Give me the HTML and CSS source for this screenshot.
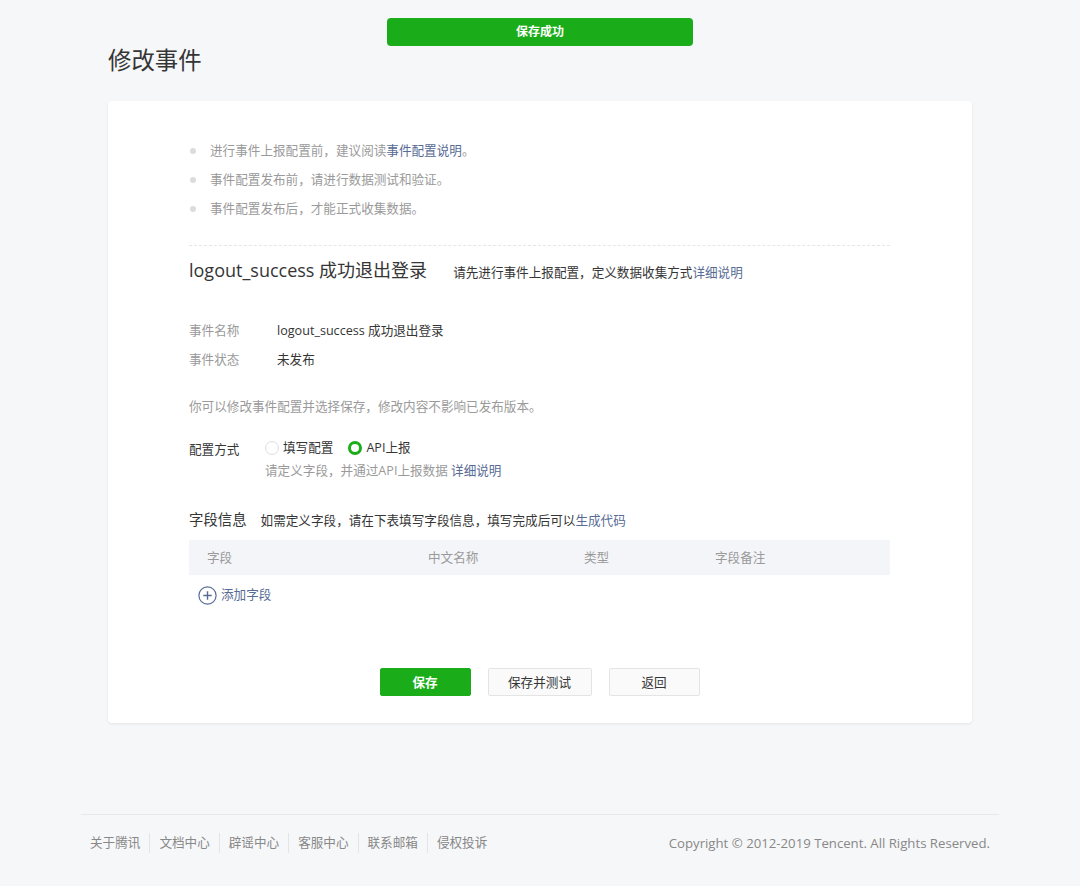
FILE: index.html
```html
<!DOCTYPE html>
<html lang="zh-CN">
<head>
    <meta charset="UTF-8">
    <meta name="viewport" content="width=device-width, initial-scale=1.0">
    <title>修改事件</title>
    <link rel="stylesheet" href="styles.css">
</head>
<body>

    <div class="toast">保存成功</div>

    <div class="main">
        <h1 class="page-title">修改事件</h1>

        <div class="card">
            <ul class="tips">
                <li>进行事件上报配置前，建议阅读<a href="#">事件配置说明</a>。</li>
                <li>事件配置发布前，请进行数据测试和验证。</li>
                <li>事件配置发布后，才能正式收集数据。</li>
            </ul>

            <div class="event-head">
                <h2>logout_success 成功退出登录</h2>
                <span class="desc">请先进行事件上报配置，定义数据收集方式<a href="#">详细说明</a></span>
            </div>

            <div class="info">
                <div class="info-row">
                    <span class="label">事件名称</span>
                    <span class="value">logout_success 成功退出登录</span>
                </div>
                <div class="info-row">
                    <span class="label">事件状态</span>
                    <span class="value">未发布</span>
                </div>
            </div>

            <p class="notice">你可以修改事件配置并选择保存，修改内容不影响已发布版本。</p>

            <div class="config">
                <span class="config-label">配置方式</span>
                <div class="config-body">
                    <div class="radios">
                        <label class="radio"><i class="dot"></i>填写配置</label>
                        <label class="radio checked"><i class="dot"></i>API上报</label>
                    </div>
                    <p class="hint">请定义字段，并通过API上报数据 <a href="#">详细说明</a></p>
                </div>
            </div>

            <div class="fields-head">
                <h3>字段信息</h3>
                <span class="desc">如需定义字段，请在下表填写字段信息，填写完成后可以<a href="#">生成代码</a></span>
            </div>

            <div class="table-head">
                <span class="col col-name">字段</span>
                <span class="col col-cn">中文名称</span>
                <span class="col col-type">类型</span>
                <span class="col col-note">字段备注</span>
            </div>

            <a href="#" class="add-field">
                <svg width="19" height="19" viewBox="0 0 19 19">
                    <circle cx="9.5" cy="9.5" r="8.6" fill="none" stroke="#576b95" stroke-width="1.2"/>
                    <path d="M9.5 5.3v8.4M5.3 9.5h8.4" stroke="#576b95" stroke-width="1.4"/>
                </svg>
                添加字段
            </a>

            <div class="actions">
                <button class="btn btn-primary">保存</button>
                <button class="btn">保存并测试</button>
                <button class="btn">返回</button>
            </div>
        </div>
    </div>

    <div class="footer">
        <div class="links">
            <a href="#">关于腾讯</a>
            <a href="#">文档中心</a>
            <a href="#">辟谣中心</a>
            <a href="#">客服中心</a>
            <a href="#">联系邮箱</a>
            <a href="#">侵权投诉</a>
        </div>
        <div class="copyright">Copyright © 2012-2019 Tencent. All Rights Reserved.</div>
    </div>

</body>
</html>
```

FILE: styles.css
```css
* {
    margin: 0;
    padding: 0;
    box-sizing: border-box;
}

body {
    background: #f6f7f9;
    font-family: "Open Sans", "Noto Sans CJK SC", sans-serif;
    font-size: 12.6px;
    color: #353535;
    padding-top: 44px;
}

a {
    color: #576b95;
    text-decoration: none;
}

.toast {
    position: absolute;
    top: 18px;
    left: 387px;
    width: 306px;
    height: 28px;
    line-height: 28px;
    background: #1aad19;
    color: #fff;
    text-align: center;
    border-radius: 4px;
    font-size: 12px;
    font-weight: bold;
}

.main {
    width: 864px;
    margin: 0 auto;
}

.page-title {
    font-size: 23.4px;
    font-weight: normal;
    line-height: 32px;
    margin-bottom: 25px;
    color: #353535;
}

.card {
    background: #fff;
    border-radius: 4px;
    box-shadow: 0 1px 3px rgba(0, 0, 0, 0.08);
    padding: 35px 82px 27px 81px;
}

.tips {
    list-style: none;
    padding-bottom: 22px;
    border-bottom: 1px dashed #e4e6ea;
}

.tips li {
    line-height: 29px;
    color: #9a9a9a;
    padding-left: 21px;
    position: relative;
}

.tips li::before {
    content: "";
    position: absolute;
    left: 1px;
    top: 12px;
    width: 6px;
    height: 6px;
    border-radius: 50%;
    background: #dcdcdc;
}

.event-head {
    display: flex;
    align-items: baseline;
    margin-top: 9px;
    line-height: 30px;
}

.event-head h2 {
    font-size: 18px;
    font-weight: normal;
    margin-right: 26px;
}

.event-head .desc,
.fields-head .desc {
    color: #353535;
}

.info {
    margin-top: 28px;
}

.info-row {
    display: flex;
    line-height: 29px;
}

.info-row .label {
    width: 88px;
    color: #9a9a9a;
}

.notice {
    margin-top: 18px;
    line-height: 29px;
    color: #9a9a9a;
}

.config {
    display: flex;
    margin-top: 17px;
}

.config-label {
    width: 76px;
    line-height: 22px;
    margin-top: 1px;
}

.radios {
    display: flex;
    gap: 15px;
    line-height: 20px;
}

.radio {
    display: flex;
    align-items: center;
}

.radio .dot {
    width: 14px;
    height: 14px;
    border-radius: 50%;
    border: 1px solid #dedede;
    margin-right: 4px;
}

.radio.checked .dot {
    border: 3.5px solid #1aad19;
}

.hint {
    margin-top: 2px;
    line-height: 22px;
    color: #9a9a9a;
}

.fields-head {
    display: flex;
    align-items: baseline;
    margin-top: 26px;
    line-height: 24px;
}

.fields-head h3 {
    font-size: 14.4px;
    font-weight: normal;
    margin-right: 14px;
}

.table-head {
    display: flex;
    margin-top: 7px;
    height: 35px;
    line-height: 35px;
    background: #f4f5f8;
    color: #9a9a9a;
}

.col-name {
    width: 239px;
    padding-left: 18px;
}

.col-cn {
    width: 156px;
}

.col-type {
    width: 131px;
}

.add-field {
    display: inline-flex;
    align-items: center;
    gap: 4px;
    margin-top: 9px;
    margin-left: 9px;
    line-height: 22px;
}

.actions {
    display: flex;
    justify-content: center;
    gap: 17px;
    margin-top: 59px;
}

.btn {
    height: 28px;
    width: 91px;
    border: 1px solid #e4e4e4;
    background: #fafafa;
    color: #353535;
    border-radius: 2px;
    font-family: inherit;
    font-size: 12.6px;
    cursor: pointer;
}

.btn:nth-child(2) {
    width: 104px;
}

.btn-primary {
    background: #1aad19;
    border-color: #1aad19;
    color: #fff;
    font-weight: bold;
}

.footer {
    width: 918px;
    margin: 91px auto 0;
    border-top: 1px solid #e7e8eb;
    padding: 18px 9px 0;
    display: flex;
    justify-content: space-between;
    line-height: 20px;
}

.links {
    display: flex;
}

.links a {
    color: #888;
    padding: 0 9px;
    border-left: 1px solid #e4e4e4;
}

.links a:first-child {
    padding-left: 0;
    border-left: none;
}

.copyright {
    color: #888;
    font-size: 13.2px;
}
```
